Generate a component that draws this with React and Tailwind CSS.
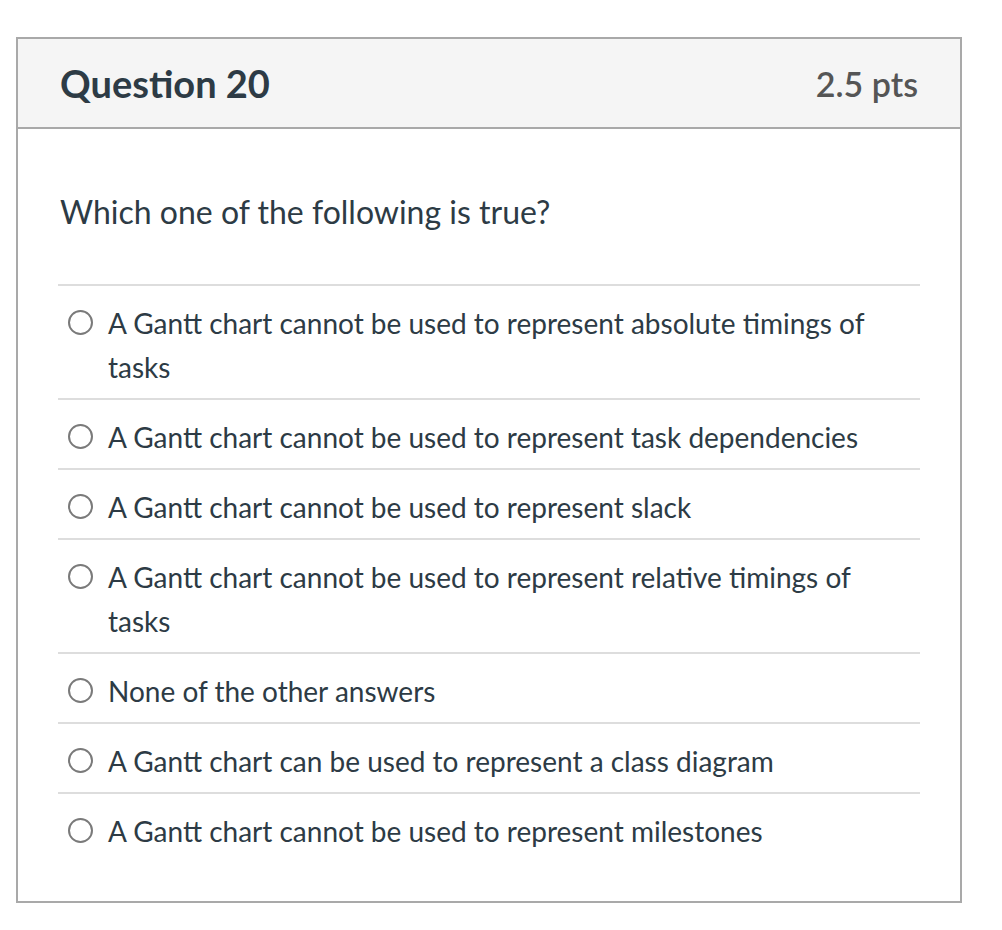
import React from "react";

const answers = [
  "A Gantt chart cannot be used to represent absolute timings of tasks",
  "A Gantt chart cannot be used to represent task dependencies",
  "A Gantt chart cannot be used to represent slack",
  "A Gantt chart cannot be used to represent relative timings of tasks",
  "None of the other answers",
  "A Gantt chart can be used to represent a class diagram",
  "A Gantt chart cannot be used to represent milestones",
];

function Answer({ text }) {
  return (
    <label className="flex items-start border-t-2 border-[#dddddd] pt-[15px] pb-[9px] pl-[10px] pr-[20px]">
      <span className="mt-[9px] w-[25px] h-[25px] shrink-0 rounded-full border-2 border-[#7a7a7a] bg-white" />
      <span className="ml-[15px] text-[28px] leading-[44px] text-[#2d3b45]">{text}</span>
    </label>
  );
}

export default function App() {
  return (
    <div className="min-h-screen bg-white pt-[37px] pl-[16px]" style={{ fontFamily: "Lato, 'Noto Sans', sans-serif" }}>
      <div className="w-[946px] h-[866px] border-2 border-[#a9a9a9]">
        <header className="h-[90px] flex items-center justify-between px-[42px] bg-[#f5f5f5] border-b-2 border-[#a9a9a9]">
          <h1 className="text-[38px] font-bold text-[#2d3b45]">Question 20</h1>
          <div className="text-[34px] font-semibold text-[#555555]">2.5 pts</div>
        </header>
        <div className="px-[40px] pt-[61px]">
          <p className="pl-[2px] text-[32px] leading-[44px] text-[#2d3b45] mb-[50px]">Which one of the following is true?</p>
          <div>
            {answers.map((a) => (
              <Answer key={a} text={a} />
            ))}
          </div>
        </div>
      </div>
    </div>
  );
}
